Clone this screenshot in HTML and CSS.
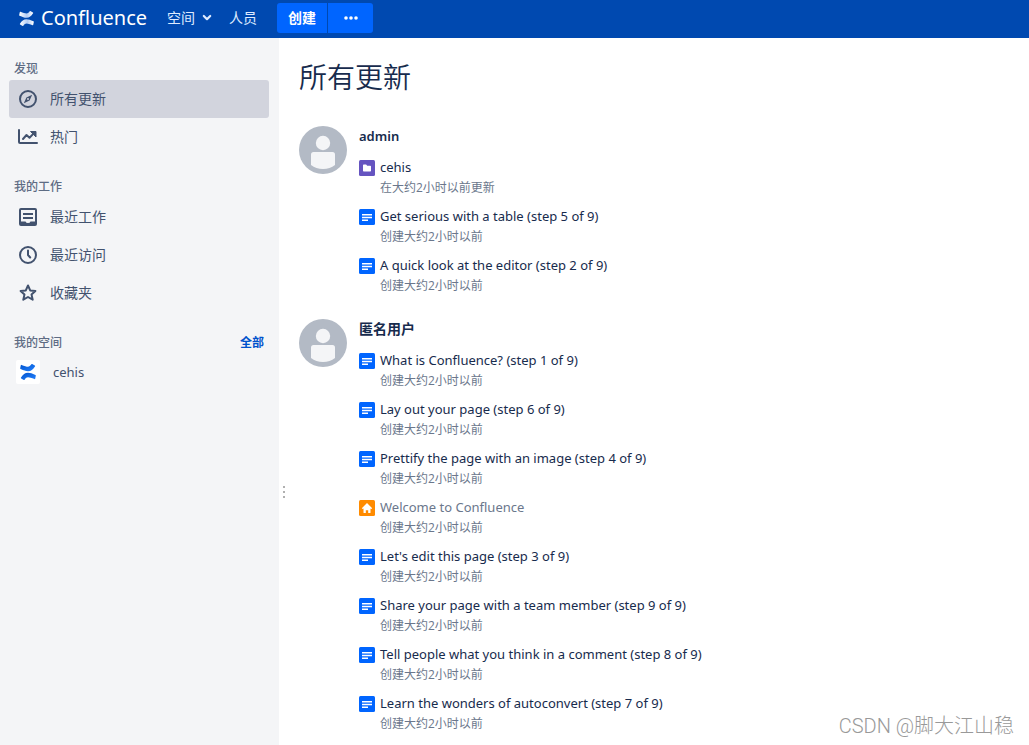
FILE: index.html
```html
<!DOCTYPE html>
<html lang="zh-CN">
<head>
<meta charset="utf-8">
<title>所有更新 - Confluence</title>
<link rel="stylesheet" href="styles.css">
</head>
<body>
<svg class="defs" aria-hidden="true">
  <symbol id="page" viewBox="0 0 16 16"><rect width="16" height="16" rx="1.5" fill="#0065ff"/><path d="M3 5h10v1.4H3zM3 7.8h10v1.4H3zM3 10.6h6v1.4H3z" fill="#fff"/></symbol>
  <symbol id="folder" viewBox="0 0 16 16"><rect width="16" height="16" rx="1.5" fill="#6554c0"/><path d="M4 5.2q0-.7.7-.7h2.4l1.1 1.3h3.1q.7 0 .7.7v4.3q0 .7-.7.7H4.7q-.7 0-.7-.7z" fill="#fff"/></symbol>
  <symbol id="home" viewBox="0 0 16 16"><rect width="16" height="16" rx="1.5" fill="#ff8b00"/><path d="M8 3l5.2 5.2-.9.9-.8-.7v4.1q0 .5-.5.5H9.2v-2.8H6.8V13H5q-.5 0-.5-.5V8.400l-.8.7-.9-.9z" fill="#fff"/></symbol>
  <symbol id="avatar" viewBox="0 0 48 48"><circle cx="24" cy="24" r="24" fill="#b3bac5"/><circle cx="24" cy="17" r="7.200" fill="#f4f5f7"/><path d="M12 28.500q0-2.500 2.500-2.500h19q2.500 0 2.500 2.500V39q-5 4-12 4t-12-4z" fill="#f4f5f7"/></symbol>
  <symbol id="mark" viewBox="0 0 16 16"><path d="M1.500.9Q.9.7.8 1.300L.2 4.300q-.1.500.4.700C4 6.300 5.400 7.200 8 7.200c3.100 0 5-1.800 7-4.800q.3-.5-.2-.8L12.200.1q-.5-.2-.8.2C10.200 2 9.300 2.700 8 2.700 6.500 2.700 4.500 1.900 1.500.9z"/><path d="M14.500 15.100q.6.2.7-.4l.6-3q.1-.5-.4-.7C12 9.700 10.600 8.800 8 8.800c-3.100 0-5 1.800-7 4.800q-.3.500.2.800l2.600 1.500q.5.200.8-.2C5.800 14 6.700 13.300 8 13.300c1.500 0 3.500.8 6.500 1.800z"/></symbol>
  <linearGradient id="white-fade" x1="0" y1="0" x2="1" y2="0"><stop offset="0" stop-color="#fff"/><stop offset=".55" stop-color="#b3cdf5"/><stop offset="1" stop-color="#fff"/></linearGradient>
  <linearGradient id="blue-fade" x1="0" y1="0" x2="1" y2="1"><stop offset="0" stop-color="#0052cc"/><stop offset="1" stop-color="#2684ff"/></linearGradient>
</svg>

<header class="topbar">
  <a class="brand" href="#"><svg class="brand-mark" fill="url(#white-fade)" aria-hidden="true"><use href="#mark"/></svg>Confluence</a>
  <nav class="topnav">
    <button class="toplink" type="button">空间<svg class="chevron" viewBox="0 0 10 8" aria-hidden="true"><path d="M1.800 2L5 5.200 8.200 2" fill="none" stroke="#deebff" stroke-width="2.200" stroke-linecap="round" stroke-linejoin="round"/></svg></button>
    <a class="toplink" href="#">人员</a>
  </nav>
  <div class="create">
    <button class="create-main" type="button">创建</button>
    <button class="create-more" type="button" aria-label="更多"><svg class="dots" viewBox="0 0 14 4" aria-hidden="true"><circle cx="2" cy="2" r="1.800"/><circle cx="7" cy="2" r="1.800"/><circle cx="12" cy="2" r="1.800"/></svg></button>
  </div>
</header>

<div class="shell">
  <aside class="sidebar">
    <section class="side-section">
      <h2 class="side-title">发现</h2>
      <a class="side-link active" href="#"><svg class="side-icon" viewBox="0 0 20 20"><circle cx="10" cy="10" r="8" fill="none" stroke="currentColor" stroke-width="2"/><path fill-rule="evenodd" d="M14.200 5.800L11.600 11.600 5.800 14.200 8.400 8.400zM10 9a1 1 0 100 2 1 1 0 000-2z" fill="currentColor"/></svg>所有更新</a>
      <a class="side-link" href="#"><svg class="side-icon" viewBox="0 0 20 20"><path d="M1 3v12q0 1 1 1h17" fill="none" stroke="currentColor" stroke-width="2" stroke-linecap="round"/><path d="M5 12l3.500-4 3 2.800 4-4.200" fill="none" stroke="currentColor" stroke-width="2" stroke-linecap="round" stroke-linejoin="round"/><path d="M12.500 4.500H18V10z" fill="currentColor" stroke="currentColor" stroke-linejoin="round"/></svg>热门</a>
    </section>
    <section class="side-section">
      <h2 class="side-title">我的工作</h2>
      <a class="side-link" href="#"><svg class="side-icon" viewBox="0 0 20 20"><rect x="2" y="2" width="16" height="16" rx="1" fill="none" stroke="currentColor" stroke-width="2"/><path d="M5 6h10v2H5zM5 10h10v2H5zM2 14.500h5.500q.5 1.500 2.500 1.500t2.500-1.500H18V18H2z" fill="currentColor"/></svg>最近工作</a>
      <a class="side-link" href="#"><svg class="side-icon" viewBox="0 0 20 20"><circle cx="10" cy="10" r="8" fill="none" stroke="currentColor" stroke-width="2"/><path d="M10 5.500V10l2.200 2.500" fill="none" stroke="currentColor" stroke-width="2" stroke-linecap="round" stroke-linejoin="round"/></svg>最近访问</a>
      <a class="side-link" href="#"><svg class="side-icon" viewBox="0 0 20 20"><path d="M10 2.500l2.200 4.900 5.200.5-3.900 3.500 1.200 5.300-4.700-2.700-4.700 2.700 1.200-5.300-3.900-3.500 5.200-.5z" fill="none" stroke="currentColor" stroke-width="2" stroke-linejoin="round"/></svg>收藏夹</a>
    </section>
    <section class="side-section">
      <h2 class="side-title">我的空间 <a class="side-all" href="#">全部</a></h2>
      <a class="side-link space" href="#"><span class="space-logo"><svg class="space-mark" fill="url(#blue-fade)" aria-hidden="true"><use href="#mark"/></svg></span>cehis</a>
    </section>
  </aside>

  <div class="splitter" role="separator" aria-label="调整边栏"><svg class="grip" viewBox="0 0 2 12"><path d="M0 0h2v2H0zM0 5h2v2H0zM0 10h2v2H0z" fill="#b0b0b0"/></svg></div>

  <main class="content">
    <h1 class="title">所有更新</h1>

    <section class="group">
      <svg class="avatar"><use href="#avatar"/></svg>
      <div class="updates">
        <h3 class="author"><a class="author-link" href="#">admin</a></h3>
        <ul class="list">
          <li class="item"><svg class="type"><use href="#folder"/></svg><a class="name" href="#">cehis</a><span class="date">在大约2小时以前更新</span></li>
          <li class="item"><svg class="type"><use href="#page"/></svg><a class="name" href="#">Get serious with a table (step 5 of 9)</a><span class="date">创建大约2小时以前</span></li>
          <li class="item"><svg class="type"><use href="#page"/></svg><a class="name" href="#">A quick look at the editor (step 2 of 9)</a><span class="date">创建大约2小时以前</span></li>
        </ul>
      </div>
    </section>

    <section class="group">
      <svg class="avatar"><use href="#avatar"/></svg>
      <div class="updates">
        <h3 class="author">匿名用户</h3>
        <ul class="list">
          <li class="item"><svg class="type"><use href="#page"/></svg><a class="name" href="#">What is Confluence? (step 1 of 9)</a><span class="date">创建大约2小时以前</span></li>
          <li class="item"><svg class="type"><use href="#page"/></svg><a class="name" href="#">Lay out your page (step 6 of 9)</a><span class="date">创建大约2小时以前</span></li>
          <li class="item"><svg class="type"><use href="#page"/></svg><a class="name" href="#">Prettify the page with an image (step 4 of 9)</a><span class="date">创建大约2小时以前</span></li>
          <li class="item"><svg class="type"><use href="#home"/></svg><a class="name visited" href="#">Welcome to Confluence</a><span class="date">创建大约2小时以前</span></li>
          <li class="item"><svg class="type"><use href="#page"/></svg><a class="name" href="#">Let's edit this page (step 3 of 9)</a><span class="date">创建大约2小时以前</span></li>
          <li class="item"><svg class="type"><use href="#page"/></svg><a class="name" href="#">Share your page with a team member (step 9 of 9)</a><span class="date">创建大约2小时以前</span></li>
          <li class="item"><svg class="type"><use href="#page"/></svg><a class="name" href="#">Tell people what you think in a comment (step 8 of 9)</a><span class="date">创建大约2小时以前</span></li>
          <li class="item"><svg class="type"><use href="#page"/></svg><a class="name" href="#">Learn the wonders of autoconvert (step 7 of 9)</a><span class="date">创建大约2小时以前</span></li>
        </ul>
      </div>
    </section>
  </main>
</div>
<div class="watermark">CSDN @脚大江山稳</div>
</body>
</html>
```

FILE: styles.css
```css
* { box-sizing: border-box; }
body {
  margin: 0;
  min-height: 100vh;
  display: flex;
  flex-direction: column;
  position: relative;
  font: 14px/20px "Open Sans", "Noto Sans CJK SC", sans-serif;
  color: #172b4d;
  background: #fff;
}
a { color: inherit; text-decoration: none; }
button { font: inherit; color: inherit; border: 0; padding: 0; background: none; cursor: pointer; }
h1, h2, h3, ul { margin: 0; padding: 0; }
.defs { position: absolute; width: 0; height: 0; }

.topbar {
  height: 38px;
  display: flex;
  align-items: center;
  padding: 0 0 2px 19px;
  background: #0049b0;
  color: #deebff;
}
.brand { display: flex; align-items: center; gap: 7px; width: 148px; color: #fff; font: 20px/36px "Noto Sans", sans-serif; }
.brand-mark { width: 15px; height: 15px; }
.topnav { display: flex; align-items: center; gap: 17px; height: 36px; }
.toplink { display: flex; align-items: center; gap: 7px; }
.chevron { width: 10px; height: 8px; }
.create { display: flex; gap: 1px; margin-left: 20px; height: 30px; }
.create-main, .create-more { background: #0065ff; color: #fff; font-weight: 700; }
.create-main { width: 50px; border-radius: 3px 0 0 3px; }
.create-more { width: 45px; border-radius: 0 3px 3px 0; display: grid; place-items: center; }
.dots { width: 14px; height: 4px; fill: #fff; }

.shell { flex: 1; display: flex; }
.sidebar { flex: 0 0 279px; padding: 0 10px 0 9px; background: #f4f5f7; color: #42526e; }
.side-section { padding-top: 20px; }
.side-title {
  display: flex;
  justify-content: space-between;
  padding: 0 5px;
  font-size: 12px;
  line-height: 22px;
  font-weight: 500;
  color: #5e6c84;
}
.side-all { color: #0052cc; font-weight: 700; }
.side-link { display: flex; align-items: center; gap: 12px; height: 38px; padding-left: 9px; border-radius: 3px; }
.side-link.active { background: #d2d4dd; }
.side-icon { width: 20px; height: 20px; }
.side-link.space { height: 36px; padding-left: 7px; gap: 13px; font: 13px/20px "Noto Sans", sans-serif; }
.space-logo { display: grid; place-items: center; width: 24px; height: 24px; border-radius: 2px; background: #fff; }
.space-mark { width: 16px; height: 16px; }

.splitter { flex: 0 0 10px; padding: 448px 0 0 4px; }
.grip { display: block; width: 2px; height: 12px; }

.content { flex: 1; min-width: 0; padding: 24px 20px 0 10px; }
.title { font-size: 28px; line-height: 30px; font-weight: 350; margin-bottom: 34px; }
.group { display: flex; gap: 12px; }
.group + .group { margin-top: 23px; }
.avatar { flex: none; width: 48px; height: 48px; }
.updates { min-width: 0; flex: 1; }
.author { font-size: 14px; line-height: 20px; font-weight: 600; margin-bottom: 10px; }
.author-link { font-family: "Noto Sans", sans-serif; font-size: 13px; }
.list { list-style: none; display: grid; gap: 7px; }
.item { display: grid; grid-template-columns: 16px 1fr; column-gap: 5px; align-items: center; }
.type { width: 16px; height: 16px; margin-top: 2px; }
.name { font: 13px/22px "Noto Sans", sans-serif; }
.name.visited { color: #6b778c; }
.date { grid-column: 2; font-size: 12px; color: #6b778c; }

.watermark {
  position: absolute;
  right: 15px;
  bottom: 7px;
  font: 300 20px/24px Roboto, "Noto Sans CJK SC", sans-serif;
  color: #999;
}
```
